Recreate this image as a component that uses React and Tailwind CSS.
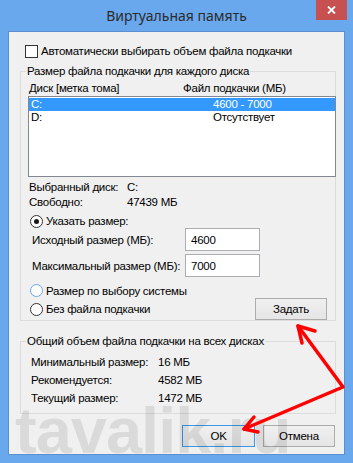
import React from 'react';

const Radio = ({ checked, focus }) => (
  <span
    className={`relative w-[13px] h-[13px] shrink-0 rounded-full border bg-white flex items-center justify-center ${
      focus ? 'border-[#6aa6e6]' : 'border-[#333333]'
    }`}
  >
    {checked && <span className="w-[5px] h-[5px] rounded-full bg-[#1a1a1a]" />}
  </span>
);

const WinButton = ({ children, focus, className = '' }) => (
  <button
    className={`h-[22px] flex items-center justify-center border bg-gradient-to-b from-[#f0f0f0] to-[#e5e5e5] text-black ${
      focus ? 'border-[#3c97e8]' : 'border-[#acacac]'
    } ${className}`}
  >
    {children}
  </button>
);

const Row = ({ label, value, w }) => (
  <div className="flex whitespace-nowrap">
    <span className={`shrink-0 ${w}`}>{label}</span>
    <span>{value}</span>
  </div>
);

export default function App() {
  return (
    <div
      className="relative w-[353px] h-[463px] overflow-hidden bg-[#6aa8ee] text-[11.5px] tracking-[-0.25px] leading-[16px] text-black whitespace-nowrap"
      style={{ fontFamily: '"Liberation Sans", Arial, sans-serif' }}
    >
      {/* title bar */}
      <div
        className="h-[31px] flex items-center justify-center text-[14px] tracking-normal text-[#2b2b2b] pt-[1px]"
        style={{ fontFamily: '"Noto Sans", sans-serif' }}
      >
        Виртуальная память
      </div>
      <div className="absolute top-0 right-[6px] w-[31px] h-[20px] bg-[#c75050] flex items-center justify-center">
        <svg width="9" height="8" viewBox="0 0 9 8">
          <path d="M1 0.5 L8 7.5 M8 0.5 L1 7.5" stroke="#fff" strokeWidth="1.8" />
        </svg>
      </div>

      {/* client area */}
      <div className="mx-[8px] h-[424px] border border-[#5a90d2] bg-[#f0f0f0] flex flex-col">
        <div className="mt-[11px] ml-[16px] h-[16px] flex items-center gap-[3px]">
          <span className="w-[13px] h-[13px] border border-[#333333] bg-white" />
          <span>Автоматически выбирать объем файла подкачки</span>
        </div>

        {/* per-disk group */}
        <div className="mt-[12px] ml-[11px] w-[316px] h-[250px] border border-[#dcdcdc] flex flex-col">
          <div className="-mt-[9px] ml-[5px] px-[1px] w-fit bg-[#f0f0f0]">
            Размер файла подкачки для каждого диска
          </div>
          <div className="mt-[1px] h-[16px] flex pl-[8px]">
            <span className="w-[154px] shrink-0">Диск [метка тома]</span>
            <span>Файл подкачки (МБ)</span>
          </div>
          <div className="ml-[7px] w-[308px] h-[82px] border border-[#828790] bg-white pt-[1px] leading-[13px]">
            <div className="h-[13px] bg-[#3399ff] text-white flex pl-[2px]">
              <span className="w-[182px] shrink-0">C:</span>
              <span>4600 - 7000</span>
            </div>
            <div className="h-[13px] flex pl-[2px]">
              <span className="w-[182px] shrink-0">D:</span>
              <span>Отсутствует</span>
            </div>
          </div>

          <div className="mt-[3px] pl-[8px] leading-[15px]">
            <Row label="Выбранный диск:" value="C:" w="w-[98px]" />
            <Row label="Свободно:" value="47439 МБ" w="w-[98px]" />
          </div>

          <div className="mt-[4px] pl-[9px] h-[14px] flex items-center gap-[3px]">
            <Radio checked />
            <span>Указать размер:</span>
          </div>
          <div className="pl-[11px] h-[23px] flex items-center">
            <span className="w-[153px] shrink-0">Исходный размер (МБ):</span>
            <div className="w-[75px] h-[23px] border border-[#abadb3] bg-white pl-[5px] flex items-center">4600</div>
          </div>
          <div className="mt-[3px] pl-[11px] h-[23px] flex items-center">
            <span className="w-[153px] shrink-0">Максимальный размер (МБ):</span>
            <div className="w-[75px] h-[23px] border border-[#abadb3] bg-white pl-[5px] flex items-center">7000</div>
          </div>

          <div className="mt-[6px] pl-[9px] h-[15px] flex items-center gap-[3px]">
            <Radio focus />
            <span>Размер по выбору системы</span>
          </div>
          <div className="pl-[9px] pr-[8px] h-[22px] flex items-center gap-[3px]">
            <Radio />
            <span>Без файла подкачки</span>
            <WinButton className="ml-auto w-[72px]">Задать</WinButton>
          </div>
        </div>

        {/* totals group */}
        <div className="mt-[20px] ml-[11px] w-[316px] h-[73px] border border-[#dcdcdc] flex flex-col">
          <div className="-mt-[9px] ml-[5px] px-[1px] w-fit bg-[#f0f0f0]">
            Общий объем файла подкачки на всех дисках
          </div>
          <div className="mt-[5px] pl-[10px] flex flex-col gap-[2px]">
            <Row label="Минимальный размер:" value="16 МБ" w="w-[127px]" />
            <Row label="Рекомендуется:" value="4582 МБ" w="w-[127px]" />
            <Row label="Текущий размер:" value="1472 МБ" w="w-[127px]" />
          </div>
        </div>

        <div className="mt-[11px] mr-[9px] flex justify-end gap-[8px]">
          <WinButton focus className="w-[73px]">OK</WinButton>
          <WinButton className="w-[72px]">Отмена</WinButton>
        </div>
      </div>

      {/* watermark */}
      <div
        className="absolute left-[15px] top-[400px] text-[65px] leading-[62px] font-bold tracking-[-1px] text-black/[0.09] pointer-events-none"
        style={{ fontFamily: '"Liberation Sans", Arial, sans-serif' }}
      >
        tavalik.ru
      </div>

      {/* red arrows */}
      <svg className="absolute inset-0 pointer-events-none" width="353" height="463" viewBox="0 0 353 463">
        <g stroke="#ff0000" strokeWidth="3.5" fill="none" strokeLinecap="round" strokeLinejoin="round">
          <path d="M298 326 L343 387 L244 429" />
          <path d="M302 343 L298 326 L315 331" />
          <path d="M254 417 L244 429 L258 432" />
        </g>
      </svg>
    </div>
  );
}
